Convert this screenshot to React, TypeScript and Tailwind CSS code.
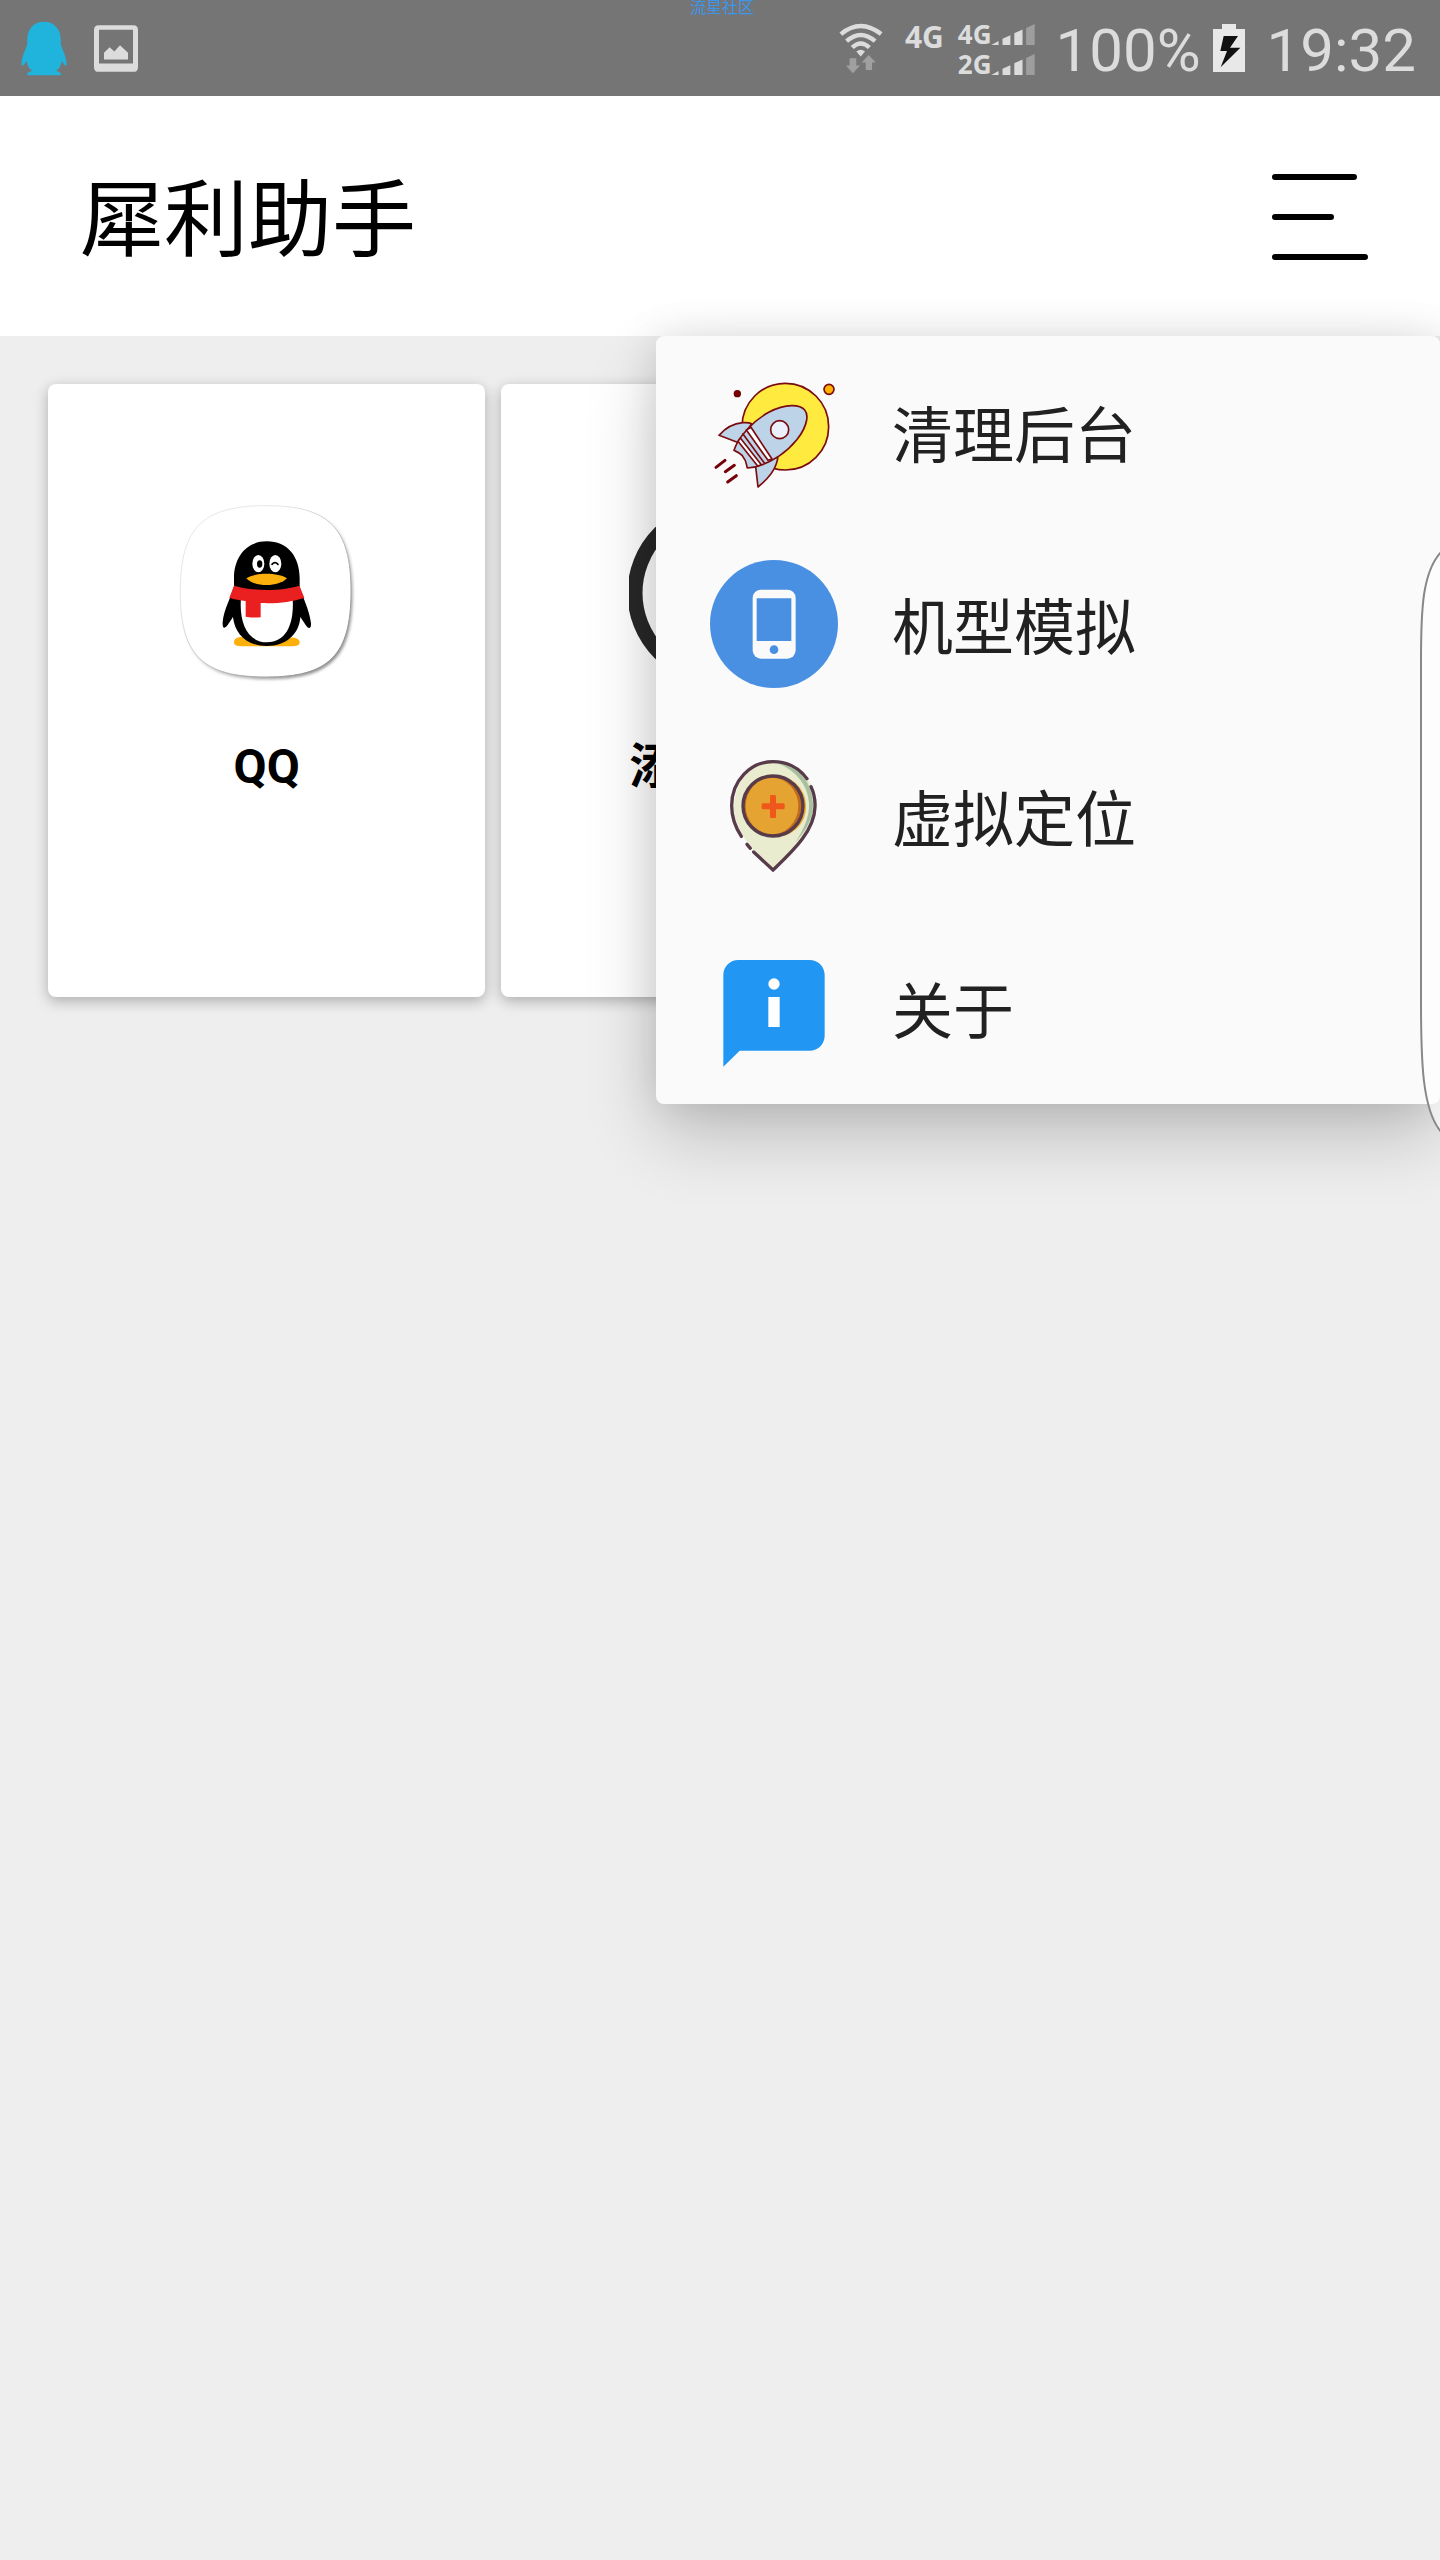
import React, { useState } from 'react'

const RocketIcon = () => (
  <svg viewBox="30 -6 384 384" className="size-32 shrink-0" stroke="#7a0c10" strokeWidth="5" strokeLinejoin="round" strokeLinecap="round" aria-hidden="true">
    <circle cx="256" cy="170" r="130" fill="#ffeb3f" />
    <circle cx="112" cy="71" r="9" fill="#7a0000" stroke="#6b0005" strokeWidth="4" />
    <circle cx="387" cy="58" r="15" fill="#ffb300" />
    <path d="M57 196C78 172 104 160 128 158C141 157 151 159 155 161L116 218Z" fill="#bdd3e8" />
    <path d="M167 290L174 351C203 327 222 303 229 281C233 269 234 264 233 261Z" fill="#bdd3e8" />
    <path d="M102 241C108 222 119 202 143 177C178 138 232 106 277 107C313 108 324 124 320 150C313 191 275 232 239 257C206 279 177 292 142 294C138 285 143 277 127 257C119 248 108 244 102 241Z" fill="#bdd3e8" />
    <path d="M139 180L153 172L216 267L204 271Z" fill="#fff" />
    <path d="M129 192L193 279" fill="none" />
    <path d="M114 214L121 204L184 284L173 288Z" fill="#fff" />
    <circle cx="239" cy="179" r="27" fill="#eaf1fc" />
    <g fill="none" stroke="#760009" strokeWidth="9">
      <path d="M48 292L75 271" />
      <path d="M76 305L103 286" />
      <path d="M83 336L109 317" />
    </g>
  </svg>
)

const PhoneIcon = () => (
  <svg viewBox="30 30 384 384" className="size-32 shrink-0" aria-hidden="true">
    <circle cx="222" cy="222" r="192" fill="#4a90e2" />
    <rect x="158" y="119" width="129" height="207" rx="25" fill="#fafafa" />
    <path d="M170 145H274V273H170Z" fill="#4a90e2" />
    <circle cx="222" cy="299" r="13" fill="#4a90e2" />
  </svg>
)

const PinIcon = () => (
  <svg viewBox="30 36 384 384" className="size-32 shrink-0" fill="none" strokeLinecap="round" aria-hidden="true">
    <path d="M219 66C291 66 350 124 350 197C350 275 284 328 219 389C170 340 102 280 102 203C102 129 152 66 219 66Z" fill="#e9eccf" />
    <path d="M222 66C294 70 339 129 339 195C339 242 314 275 287 306C310 269 329 232 327 190C324 130 280 84 222 66Z" fill="#a9c0a0" />
    <path d="M236 107C285 114 318 151 318 200C318 242 291 276 250 288Z" fill="#eba92f" />
    <circle cx="219" cy="198" r="90" fill="#bf6a1c" />
    <ellipse cx="216" cy="198" rx="79" ry="85" fill="#e5a431" />
    <rect x="210" y="165" width="18" height="69" rx="4" fill="#ef571b" />
    <rect x="185" y="190" width="69" height="18" rx="4" fill="#ef571b" />
    <circle cx="219" cy="198" r="90" stroke="#573b4b" strokeWidth="10" />
    <g stroke="#573b4b" strokeWidth="10">
      <path d="M124 289C105 260 95 231 95 197C95 122 151 65 219 65C261 65 297 84 321 116" />
      <path d="M333 140C342 160 346 180 345 200C344 275 271 340 219 390L161 336" />
      <path d="M141 313L151 325" />
    </g>
  </svg>
)

const AboutIcon = () => (
  <svg viewBox="30 12 384 384" className="size-32 shrink-0" aria-hidden="true">
    <path d="M70 105C70 79 91 60 115 60H329C354 60 374 80 374 105V287C374 312 354 332 329 332H119L70 380Z" fill="#2196f3" />
    <circle cx="222" cy="132" r="17" fill="#fff" />
    <path d="M205 171H239V261H205Z" fill="#fff" />
  </svg>
)

const QQIcon = () => (
  <svg viewBox="0 0 546 546" className="size-[182px]" aria-hidden="true">
    <defs>
      <linearGradient id="tileEdge" x1="0" y1="0" x2="1" y2="1">
        <stop offset="0.3" stopColor="#e6e6e6" />
        <stop offset="1" stopColor="#808080" />
      </linearGradient>
      <filter id="tileBlur" x="-10%" y="-10%" width="120%" height="120%">
        <feGaussianBlur stdDeviation="4" />
      </filter>
    </defs>
    {/* app tile */}
    <path d="M274 22C463 22 530 85 530 277C530 470 463 535 274 535C86 535 16 470 16 277C16 85 86 22 274 22Z" fill="url(#tileEdge)" filter="url(#tileBlur)" />
    <path d="M271 14C458 14 525 80 525 271C525 464 458 528 271 528C80 528 13 464 13 271C13 80 80 14 271 14Z" fill="#fff" stroke="url(#tileEdge)" strokeWidth="3" />
    {/* penguin */}
    <path d="M174 424C174 402 208 405 272 420C336 405 371 405 371 424C371 435 361 436 328 436H218C185 436 174 436 174 424Z" fill="#fcb00c" />
    <path d="M272 121C336 121 371 168 371 232V256C377 284 400 325 405 367C406 385 397 384 389 372L373 348C370 397 333 435 272 435C211 435 176 397 171 348L155 372C144 386 139 381 140 364C143 325 166 288 174 256V232C174 168 211 121 272 121Z" fill="#000" />
    <path d="M196 280H349C357 359 336 424 273 424C209 424 187 355 196 280Z" fill="#fff" />
    <path d="M174 254C229 271 315 271 370 254L385 290C348 303 302 308 254 306V349Q232 351 209 347V300C192 298 176 295 160 290Z" fill="#ea1f20" />
    <ellipse cx="247" cy="188" rx="18" ry="26" fill="#fff" />
    <ellipse cx="298" cy="188" rx="18" ry="26" fill="#fff" />
    <ellipse cx="251" cy="189" rx="8" ry="11" fill="#000" />
    <path d="M288 190Q297 180 306 190" fill="none" stroke="#000" strokeWidth="5" strokeLinecap="round" />
    <path d="M211 232C238 214 306 214 333 232C308 259 236 259 211 232Z" fill="#fcb00c" />
  </svg>
)

const AddIcon = () => (
  <svg viewBox="0 0 181 182" className="h-[182px] w-[181px]" fill="none" stroke="#282828" strokeWidth="15" aria-hidden="true">
    <circle cx="90.5" cy="92" r="84.5" />
    <path d="M90.5 50V134M48.5 92H132.5" />
  </svg>
)

const Signal = () => (
  <svg viewBox="0 0 132 64" className="h-[21px] w-11" fill="#dcdcdc" aria-hidden="true">
    <path d="M0 64L22 52V64Z" />
    <path d="M34 45L58 34V64H34Z" />
    <path d="M70 28L95 17V64H70Z" />
    <path d="M106 12L132 0V64H106Z" fill="#9e9e9e" />
  </svg>
)

const StatusBar = () => (
  <div className="relative flex h-24 items-center justify-between bg-[#757575] pl-[21px] pr-6 text-[#dcdcdc]">
    <span className="absolute inset-x-0 top-0 pl-1 text-center text-[16px] leading-4 text-[#3c96ea]">
      流星社区
    </span>
    <div className="flex items-center gap-[27px]">
      <svg viewBox="62 63 141 168" className="h-[55px] w-[46px]" fill="#20b4dc" aria-hidden="true">
        <path d="M132 65C164 65 183 87 184 120V135C190 154 201 171 202 197C201 203 195 199 187 185C185 198 180 208 170 215L184 222V229H81V222L96 215C86 209 81 198 79 185C70 199 65 203 63 196C64 173 75 154 81 135V120C82 87 101 65 132 65Z" />
      </svg>
      <svg viewBox="282 77 132 140" className="h-[47px] w-11" fill="#dcdcdc" aria-hidden="true">
        <path fillRule="evenodd" d="M296 77H400Q414 77 414 91V203Q414 217 400 217H296Q282 217 282 203V91Q282 77 296 77ZM297 91V192H399V91Z" />
        <path d="M312 160L329 143L343 156L360 137L384 160V180H312Z" />
      </svg>
    </div>
    <div className="flex items-center">
      <svg viewBox="57 70 130 152" className="mr-[22px] h-[51px] w-11" fill="none" aria-hidden="true">
        <g stroke="#dcdcdc" strokeWidth="13">
          <path d="M62 103Q121 55 182 103" />
          <path d="M79 124Q121 87 164 124" />
          <path d="M96 143Q121 119 147 143" />
        </g>
        <path d="M108 155Q121 145 134 155L121 170Z" fill="#dcdcdc" />
        <path d="M88 175H108V197H119L98 220L77 197H88Z" fill="#a0a0a0" />
        <path d="M145 165L166 188H155V210H136V188H124Z" fill="#a0a0a0" />
      </svg>
      <span className="mb-[22px] mr-[14px] font-['Noto_Sans'] text-[30px] font-bold leading-8">4G</span>
      <div className="mr-5 flex flex-col pt-0.5 font-['Noto_Sans'] text-[26px] font-bold leading-[30px]">
        <div className="flex items-center">
          <span>4G</span>
          <Signal />
        </div>
        <div className="flex items-center">
          <span>2G</span>
          <Signal />
        </div>
      </div>
      <span className="pt-1.5 text-[60px] leading-none">100%</span>
      <svg viewBox="519 75 96 144" className="ml-3 mr-[22px] h-12 w-8" aria-hidden="true">
        <path d="M546 75H588V90H615V219H519V90H546Z" fill="#e8e8e8" />
        <path d="M551 111H594L570 146H601L542 205L561 156H541Z" fill="#111" />
      </svg>
      <span className="pt-1.5 text-[60px] leading-none">19:32</span>
    </div>
  </div>
)

const apps = [
  { title: 'QQ', icon: <QQIcon /> },
  { title: '添加App', icon: <AddIcon /> },
]

const menuItems = [
  { title: '清理后台', icon: <RocketIcon /> },
  { title: '机型模拟', icon: <PhoneIcon /> },
  { title: '虚拟定位', icon: <PinIcon /> },
  { title: '关于', icon: <AboutIcon /> },
]

export default function App() {
  const [isMenuOpen, setIsMenuOpen] = useState(true)

  return (
    <div className="relative min-h-screen overflow-hidden bg-[#eeeeee] font-[Roboto,'Noto_Sans_CJK_SC',sans-serif] text-black">
      <StatusBar />

      <header className="relative z-10 flex h-60 items-center justify-between bg-white pl-20 pr-[68px]">
        <h1 className="pt-3 text-[84px] leading-[120px]">犀利助手</h1>
        <button type="button" aria-label="菜单" onClick={() => setIsMenuOpen(!isMenuOpen)}>
          <svg viewBox="0 0 104 88" className="h-[88px] w-[104px]" stroke="#000" strokeWidth="6" strokeLinecap="round" aria-hidden="true">
            <path d="M7 5H86M7 45H63M7 85H97" />
          </svg>
        </button>

        {isMenuOpen && (
          <nav className="absolute right-0 top-full w-[784px] rounded-lg bg-[#fafafa] shadow-[0_32px_72px_rgba(0,0,0,0.2),0_0_40px_rgba(0,0,0,0.1)]">
            <ul>
              {menuItems.map((item) => (
                <li key={item.title}>
                  <button type="button" className="flex h-48 w-full items-center gap-[54px] pl-[54px] text-left text-[61px] leading-[80px] text-[#212121]">
                    {item.icon}
                    <span className="pt-2.5">{item.title}</span>
                  </button>
                </li>
              ))}
            </ul>
          </nav>
        )}
      </header>

      <main className="grid grid-cols-3 gap-4 p-12">
        {apps.map((app) => (
          <button
            key={app.title}
            type="button"
            className="flex flex-col items-center rounded-lg bg-white pb-[198px] pt-[117px] shadow-[0_4px_14px_rgba(0,0,0,0.28)]"
          >
            {app.icon}
            <span className="mt-[52px] text-[48px] font-bold leading-[64px]">{app.title}</span>
          </button>
        ))}
      </main>

      {/* edge panel handle */}
      <svg viewBox="0 0 20 582" className="absolute right-0 top-[551px] z-20 h-[582px] w-5" aria-hidden="true">
        <path d="M22 0C2 20 1 60 1 110V450C1 510 2 560 22 582" fill="#fff" fillOpacity="0.6" stroke="#888" strokeWidth="2" />
      </svg>
    </div>
  )
}
